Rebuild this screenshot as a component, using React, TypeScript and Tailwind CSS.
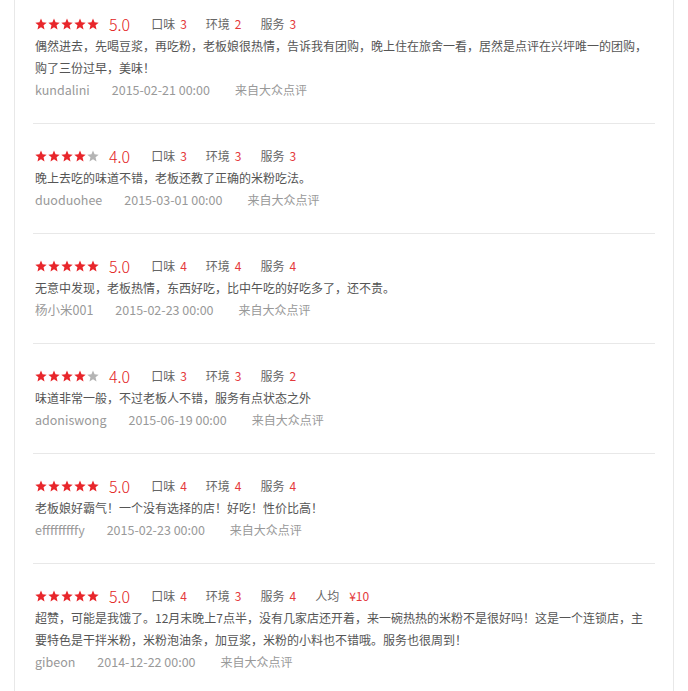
import React from "react"

type Review = {
  score: number
  taste: number
  env: number
  service: number
  price?: string
  text: string
  user: string
  time: string
}

const reviews: Review[] = [
  {
    score: 5, taste: 3, env: 2, service: 3,
    text: "偶然进去，先喝豆浆，再吃粉，老板娘很热情，告诉我有团购，晚上住在旅舍一看，居然是点评在兴坪唯一的团购，购了三份过早，美味！",
    user: "kundalini", time: "2015-02-21 00:00",
  },
  {
    score: 4, taste: 3, env: 3, service: 3,
    text: "晚上去吃的味道不错，老板还教了正确的米粉吃法。",
    user: "duoduohee", time: "2015-03-01 00:00",
  },
  {
    score: 5, taste: 4, env: 4, service: 4,
    text: "无意中发现，老板热情，东西好吃，比中午吃的好吃多了，还不贵。",
    user: "杨小米001", time: "2015-02-23 00:00",
  },
  {
    score: 4, taste: 3, env: 3, service: 2,
    text: "味道非常一般，不过老板人不错，服务有点状态之外",
    user: "adoniswong", time: "2015-06-19 00:00",
  },
  {
    score: 5, taste: 4, env: 4, service: 4,
    text: "老板娘好霸气！一个没有选择的店！好吃！性价比高！",
    user: "efffffffffy", time: "2015-02-23 00:00",
  },
  {
    score: 5, taste: 4, env: 3, service: 4, price: "¥10",
    text: "超赞，可能是我饿了。12月末晚上7点半，没有几家店还开着，来一碗热热的米粉不是很好吗！这是一个连锁店，主要特色是干拌米粉，米粉泡油条，加豆浆，米粉的小料也不错哦。服务也很周到！",
    user: "gibeon", time: "2014-12-22 00:00",
  },
]

const Star = ({ on }: { on: boolean }) => (
  <svg width="12" height="12" viewBox="0 0 24 24" className={on ? "fill-[#e8262b]" : "fill-[#b4b4b4]"}>
    <polygon points="12,1 15.1,8.6 23.4,9.3 17.1,14.7 19,22.8 12,18.5 5,22.8 6.9,14.7 0.6,9.3 8.9,8.6" />
  </svg>
)

const Sub = ({ label, value }: { label: string; value: string | number }) => (
  <span className="mr-[19px] flex items-center">
    <span className="text-[#666]">{label}</span>
    <span className="ml-[5px] text-[#e4393c]">{value}</span>
  </span>
)

const ReviewItem = ({ r, first }: { r: Review; first: boolean }) => (
  <div className={`border-b border-[#e8e8e8] pl-[2px] pb-[22px] ${first ? "pt-[12px]" : "pt-[20px]"}`}>
    <div className="flex h-[23px] items-center text-[12px]">
      <div className="flex gap-[1px]">
        {[1, 2, 3, 4, 5].map(i => <Star key={i} on={i <= r.score} />)}
      </div>
      <span className="ml-[10px] mr-[21px] text-[16px] font-light text-[#e3211c]">{r.score.toFixed(1)}</span>
      <Sub label="口味" value={r.taste} />
      <Sub label="环境" value={r.env} />
      <Sub label="服务" value={r.service} />
      {r.price && (
        <span className="flex items-center">
          <span className="text-[#666]">人均</span>
          <span className="ml-[10px] text-[#e4393c]">{r.price}</span>
        </span>
      )}
    </div>
    <p className="pr-[6px] text-[12px] leading-[22px] text-[#555]">{r.text}</p>
    <div className="flex h-[22px] items-center text-[12.5px] text-[#999]">
      <span className="mr-[22px]">{r.user}</span>
      <span className="mr-[25px]">{r.time}</span>
      <span className="text-[12px]">来自大众点评</span>
    </div>
  </div>
)

export default function App() {
  return (
    <div className="min-h-screen bg-white font-['Microsoft_YaHei','Noto_Sans_CJK_SC',sans-serif]">
      <div className="ml-[14px] min-h-screen w-[660px] border-x border-[#e8e8e8] px-[18px]">
        {reviews.map((r, i) => (
          <ReviewItem key={i} r={r} first={i === 0} />
        ))}
      </div>
    </div>
  )
}
